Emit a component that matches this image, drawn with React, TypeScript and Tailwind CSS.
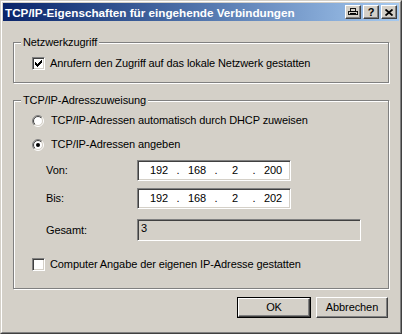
import React from 'react';

const raised =
  'border border-t-white border-l-white border-r-[#404040] border-b-[#404040] shadow-[inset_-1px_-1px_0_#808080,inset_1px_1px_0_#d4d0c8]';
const sunken =
  'border border-t-[#808080] border-l-[#808080] border-r-white border-b-white shadow-[inset_1px_1px_0_#404040,inset_-1px_-1px_0_#d4d0c8]';
const etched = 'border border-[#808080] shadow-[1px_1px_0_#fff,inset_1px_1px_0_#fff]';

const CheckMark = () => (
  <svg width="7" height="7" viewBox="0 0 7 7" shapeRendering="crispEdges">
    <rect x="6" y="0" width="1" height="1" />
    <rect x="5" y="1" width="2" height="1" />
    <rect x="0" y="2" width="1" height="1" />
    <rect x="4" y="2" width="3" height="1" />
    <rect x="0" y="3" width="2" height="1" />
    <rect x="3" y="3" width="3" height="1" />
    <rect x="0" y="4" width="5" height="1" />
    <rect x="1" y="5" width="3" height="1" />
    <rect x="2" y="6" width="1" height="1" />
  </svg>
);

const Checkbox = ({ checked, label }: { checked?: boolean; label: string }) => (
  <div className="flex items-center h-[13px]">
    <div className={`w-[13px] h-[13px] bg-white flex items-center justify-center ${sunken}`}>
      {checked && <CheckMark />}
    </div>
    <span className="ml-[5px]">{label}</span>
  </div>
);

const Radio = ({ checked, id, label }: { checked?: boolean; id: string; label: string }) => (
  <div className="flex items-center h-[13px]">
    <svg width="12" height="12" viewBox="0 0 12 12">
      <defs>
        <linearGradient id={`o${id}`} x1="0" y1="0" x2="1" y2="1">
          <stop offset="0.5" stopColor="#808080" />
          <stop offset="0.5" stopColor="#ffffff" />
        </linearGradient>
        <linearGradient id={`i${id}`} x1="0" y1="0" x2="1" y2="1">
          <stop offset="0.5" stopColor="#404040" />
          <stop offset="0.5" stopColor="#d4d0c8" />
        </linearGradient>
      </defs>
      <circle cx="6" cy="6" r="5.5" fill="none" stroke={`url(#o${id})`} />
      <circle cx="6" cy="6" r="4.5" fill="#fff" stroke={`url(#i${id})`} />
      {checked && <circle cx="6" cy="6" r="2" fill="#000" />}
    </svg>
    <span className="ml-[7px]">{label}</span>
  </div>
);

const IpBox = ({ parts }: { parts: string[] }) => (
  <div className={`w-[154px] h-[21px] bg-white flex items-center pl-[6px] ${sunken}`}>
    {parts.map((p, i) => (
      <React.Fragment key={i}>
        {i > 0 && <span className="w-[8px] text-center">.</span>}
        <span className="w-[30px] text-center">{p}</span>
      </React.Fragment>
    ))}
  </div>
);

const TitleButton = ({ children }: { children: React.ReactNode }) => (
  <div className={`w-[16px] h-[14px] bg-[#d4d0c8] flex items-center justify-center ${raised}`}>{children}</div>
);

export default function App() {
  return (
    <div className="w-[402px] h-[334px] bg-[#d4d0c8] border border-t-[#d4d0c8] border-l-[#d4d0c8] border-r-[#404040] border-b-[#404040] text-[11px] leading-[13px] tracking-[-0.1px] text-black font-['Liberation_Sans',Arial,sans-serif]">
      <div className="h-full border border-t-white border-l-white border-r-[#808080] border-b-[#808080] p-px flex flex-col">
        <div className="h-[18px] flex items-center bg-gradient-to-r from-[#0a246a] to-[#a6caf0] pl-[2px] pr-[2px]">
          <span className="flex-1 text-white font-bold text-[11.7px] tracking-normal">
            TCP/IP-Eigenschaften für eingehende Verbindungen
          </span>
          <div className="flex gap-[2px]">
            <TitleButton>
              <svg width="10" height="8" viewBox="0 0 10 8" shapeRendering="crispEdges">
                <path d="M2 0h6v3h-6z M0 3h10v4h-10z" fill="none" stroke="#000" strokeWidth="1" transform="translate(0.5 0.5) scale(0.9)" />
                <rect x="2" y="5" width="6" height="1" fill="#000" />
              </svg>
            </TitleButton>
            <TitleButton>
              <span className="font-bold text-[11px] leading-none">?</span>
            </TitleButton>
            <TitleButton>
              <svg width="8" height="7" viewBox="0 0 8 7">
                <path d="M0.5 0.5L7.5 6.5M7.5 0.5L0.5 6.5" stroke="#000" strokeWidth="1.8" />
              </svg>
            </TitleButton>
          </div>
        </div>

        <div className="flex-1 px-[10px]">
          <div className={`relative mt-[21px] pt-[14px] pb-[12px] pl-[18px] ${etched}`}>
            <span className="absolute -top-[7px] left-[7px] px-[2px] bg-[#d4d0c8]">Netzwerkzugriff</span>
            <Checkbox checked label="Anrufern den Zugriff auf das lokale Netzwerk gestatten" />
          </div>

          <div className={`relative mt-[17px] pt-[13px] pb-[17px] pl-[18px] ${etched}`}>
            <span className="absolute -top-[7px] left-[7px] px-[2px] bg-[#d4d0c8]">TCP/IP-Adresszuweisung</span>
            <Radio id="a" label="TCP/IP-Adressen automatisch durch DHCP zuweisen" />
            <div className="mt-[11px]">
              <Radio id="b" checked label="TCP/IP-Adressen angeben" />
            </div>
            <div className="mt-[9px] flex items-center">
              <span className="ml-[14px] w-[91px]">Von:</span>
              <IpBox parts={['192', '168', '2', '200']} />
            </div>
            <div className="mt-[7px] flex items-center">
              <span className="ml-[14px] w-[91px]">Bis:</span>
              <IpBox parts={['192', '168', '2', '202']} />
            </div>
            <div className="mt-[10px] flex items-center">
              <span className="ml-[14px] w-[91px]">Gesamt:</span>
              <div className={`w-[224px] h-[22px] pl-[3px] pt-[2px] ${sunken}`}>3</div>
            </div>
            <div className="mt-[17px]">
              <Checkbox label="Computer Angabe der eigenen IP-Adresse gestatten" />
            </div>
          </div>

          <div className="mt-[8px] flex justify-end gap-[5px] pr-[1px]">
            <button className="w-[74px] h-[21px] border border-black bg-[#d4d0c8]">
              <div className="h-full flex items-center justify-center border border-t-white border-l-white border-r-[#404040] border-b-[#404040] shadow-[inset_-1px_-1px_0_#808080]">
                OK
              </div>
            </button>
            <button className={`w-[72px] h-[21px] bg-[#d4d0c8] flex items-center justify-center ${raised}`}>Abbrechen</button>
          </div>
        </div>
      </div>
    </div>
  );
}
